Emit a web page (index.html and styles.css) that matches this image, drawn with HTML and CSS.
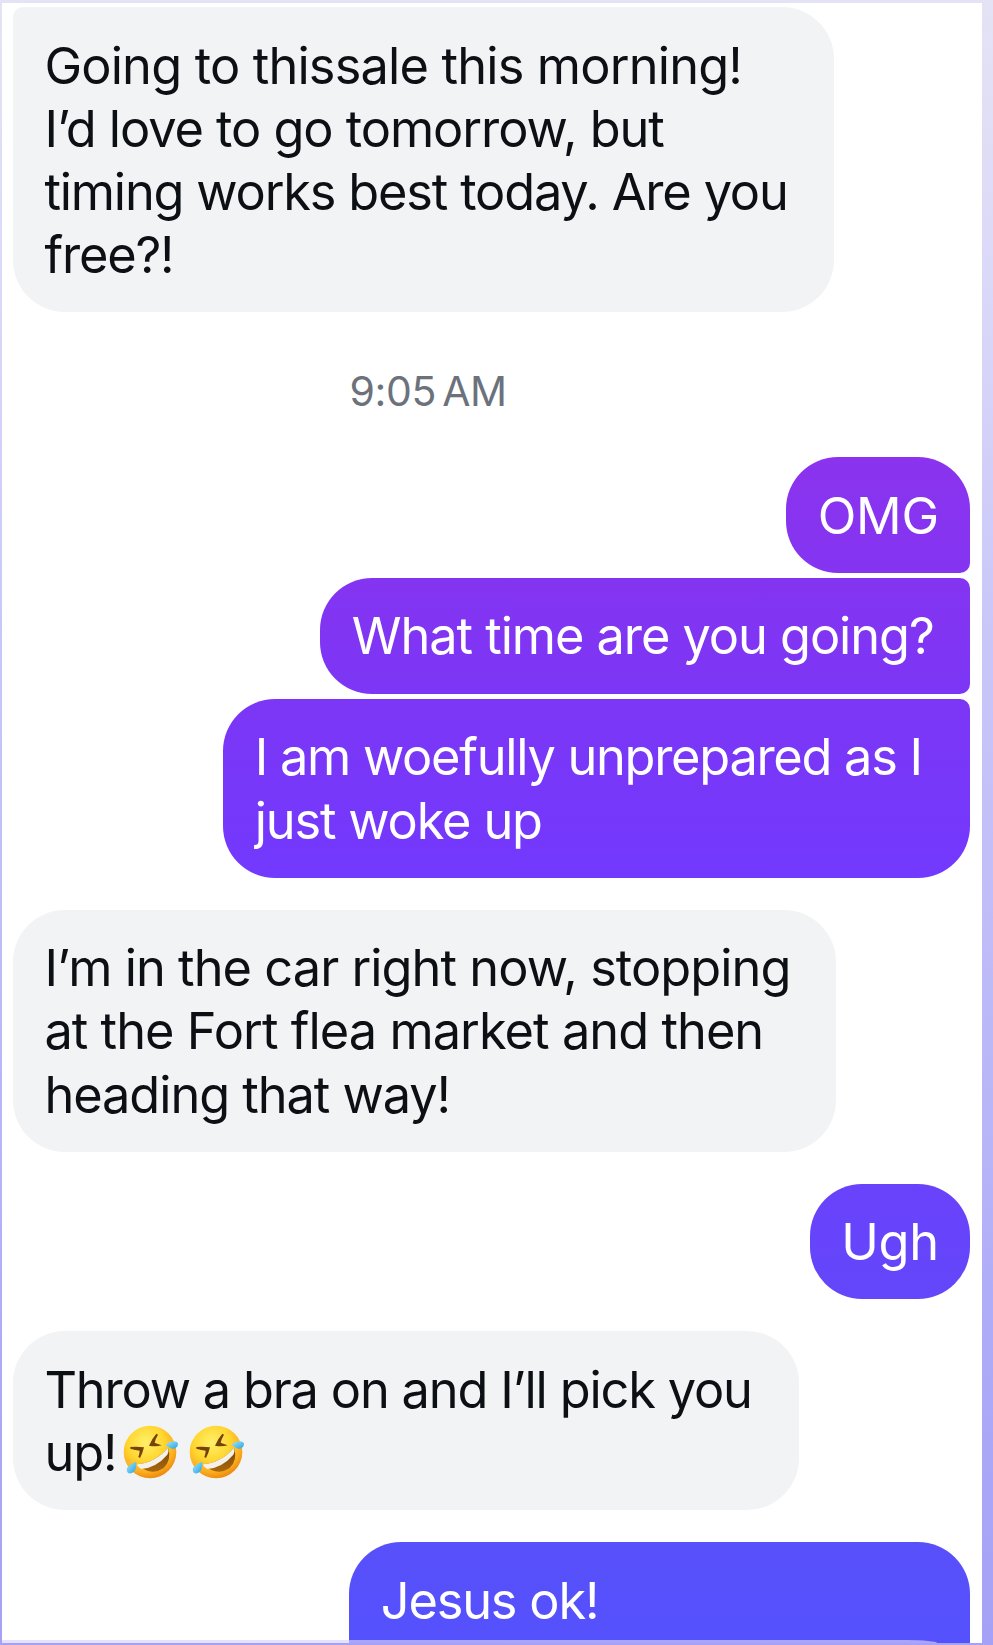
FILE: index.html
```html
<!DOCTYPE html>
<html lang="en">
<head>
    <meta charset="UTF-8">
    <meta name="viewport" content="width=device-width, initial-scale=1.0">
    <title>Messages</title>
    <link rel="stylesheet" href="styles.css">
</head>
<body>
    <svg class="defs" aria-hidden="true">
        <defs>
            <radialGradient id="face" cx="0.42" cy="0.32" r="0.7">
                <stop offset="0" stop-color="#fff06a"/>
                <stop offset="0.5" stop-color="#ffd62f"/>
                <stop offset="0.8" stop-color="#fbae20"/>
                <stop offset="1" stop-color="#ec860c"/>
            </radialGradient>
            <linearGradient id="mouth" x1="0" y1="0" x2="0" y2="1">
                <stop offset="0" stop-color="#7a4507"/>
                <stop offset="1" stop-color="#a8680c"/>
            </linearGradient>
            <linearGradient id="tear" x1="0" y1="0" x2="1" y2="1">
                <stop offset="0" stop-color="#a5e6fa"/>
                <stop offset="1" stop-color="#25a3e3"/>
            </linearGradient>
            <symbol id="rofl" viewBox="0 0 168 162">
                <circle cx="81" cy="81" r="79" fill="url(#face)"/>
                <path d="M22 66Q42 64 63 67Q59 84 51 99L46 96Q50 84 50 77Q37 75 22 71Z" fill="#75430a"/>
                <path d="M100 26L105 29Q97 42 95 53Q104 57 116 61Q98 66 78 62Q86 42 100 26Z" fill="#75430a"/>
                <path d="M41 118Q98 112 135 68Q147 106 121 130Q84 155 41 118Z" fill="url(#mouth)"/>
                <path d="M41 118Q98 112 135 68Q138 80 133 89Q100 128 55 132Q45 127 41 118Z" fill="#f5f1ea"/>
                <path d="M127 59Q144 46 160 50Q168 54 163 64Q156 75 144 70Q136 66 127 59Z" fill="url(#tear)"/>
                <path d="M40 110Q41 130 33 140Q24 148 15 144Q8 136 14 126Q24 115 40 110Z" fill="url(#tear)"/>
            </symbol>
        </defs>
    </svg>

    <main class="chat">
        <div class="bubble incoming first">
            <span class="line wide">Going to thissale this morning!</span>
            <span class="line">I’d love to go tomorrow, but</span>
            <span class="line tight">timing works best today. Are you</span>
            <span class="line tight">free?!</span>
        </div>

        <time class="timestamp">9:05 AM</time>

        <div class="group">
            <div class="bubble outgoing omg">
                <span class="line normal">OMG</span>
            </div>
            <div class="bubble outgoing going">
                <span class="line">What time are you going?</span>
            </div>
            <div class="bubble outgoing unprepared">
                <span class="line tighter">I am woefully unprepared as I</span>
                <span class="line tight">just woke up</span>
            </div>
        </div>

        <div class="bubble incoming car">
            <span class="line semi">I’m in the car right now, stopping</span>
            <span class="line semi">at the Fort flea market and then</span>
            <span class="line">heading that way!</span>
        </div>

        <div class="bubble outgoing ugh">
            <span class="line normal">Ugh</span>
        </div>

        <div class="bubble incoming throw">
            <span class="line tight">Throw a bra on and I’ll pick you</span>
            <span class="line">up!<svg class="emoji" role="img" aria-label="🤣"><use href="#rofl"/></svg><svg class="emoji" role="img" aria-label="🤣"><use href="#rofl"/></svg></span>
        </div>

        <div class="bubble outgoing jesus">
            <span class="line tight">Jesus ok!</span>
        </div>
        <div class="edge"></div>
    </main>
</body>
</html>
```
FILE: styles.css
```css
* {
    box-sizing: border-box;
}

body {
    margin: 0;
    padding: 3px 11px 2px 2px;
    height: 1645px;
    overflow: hidden;
    background: linear-gradient(#e4e3f5 0, #d9d7f8 320px, #cac8f8 600px, #c0bdf8 900px, #b6b3f8 1180px, #aeabf8 1330px, #a5a1f6 1645px);
    font-family: Inter, "Noto Sans", sans-serif;
}

.defs {
    position: absolute;
    width: 0;
    height: 0;
}

.chat {
    position: relative;
    display: flex;
    flex-direction: column;
    gap: 31.8px;
    height: 1640px;
    padding: 4px 12px 0 10.6px;
    overflow: hidden;
    background: #fff;
}

.bubble {
    flex: none;
    padding: 26.6px 31.8px 26px;
    border-radius: 52px;
    font-size: 50.5px;
    line-height: 63.2px;
    letter-spacing: -1.06px;
    white-space: nowrap;
}

.line {
    display: block;
    height: 63.2px;
}

.line.normal {
    letter-spacing: -0.3px;
}

.line.wide {
    letter-spacing: -0.82px;
}

.line.semi {
    letter-spacing: -0.95px;
}

.line.tight {
    letter-spacing: -1.18px;
}

.line.tighter {
    letter-spacing: -1.28px;
}

.incoming {
    align-self: flex-start;
    background: #f2f3f5;
    color: #0c1014;
}

.outgoing {
    align-self: flex-end;
    background: linear-gradient(#8b33ee 457px, #7c36f5 699px, #7239fe 878px, #6942fb 1183px, #5850fa 1541px, #5451fd 1645px) fixed;
    color: #fff;
}

.group {
    display: flex;
    flex-direction: column;
    gap: 5.2px;
}

.timestamp {
    align-self: flex-start;
    margin: 26.6px 0 14.4px 337px;
    font-size: 41px;
    line-height: 40px;
    letter-spacing: -0.4px;
    word-spacing: -5px;
    color: #6c727c;
}

.first {
    width: 821px;
    border-top-left-radius: 10px;
}

.omg {
    width: 184px;
    border-bottom-right-radius: 10px;
}

.going {
    width: 650px;
    border-top-right-radius: 10px;
    border-bottom-right-radius: 10px;
}

.unprepared {
    width: 747px;
    border-top-right-radius: 10px;
}

.car {
    width: 823.5px;
}

.ugh {
    width: 160.5px;
}

.throw {
    width: 786.5px;
}

/* runs on below the fold */
.jesus {
    width: 621px;
    height: 242px;
}

.emoji {
    width: 56px;
    height: 54px;
    margin-left: 6.5px;
    vertical-align: -8.5px;
}

.emoji + .emoji {
    margin-left: 10px;
}

/* top of the panel that slides over the thread */
.edge {
    position: absolute;
    left: 0;
    bottom: 0;
    width: 935px;
    height: 3px;
    border-top-right-radius: 30px 3px;
    background: rgba(214, 211, 250, 0.65);
}
```
